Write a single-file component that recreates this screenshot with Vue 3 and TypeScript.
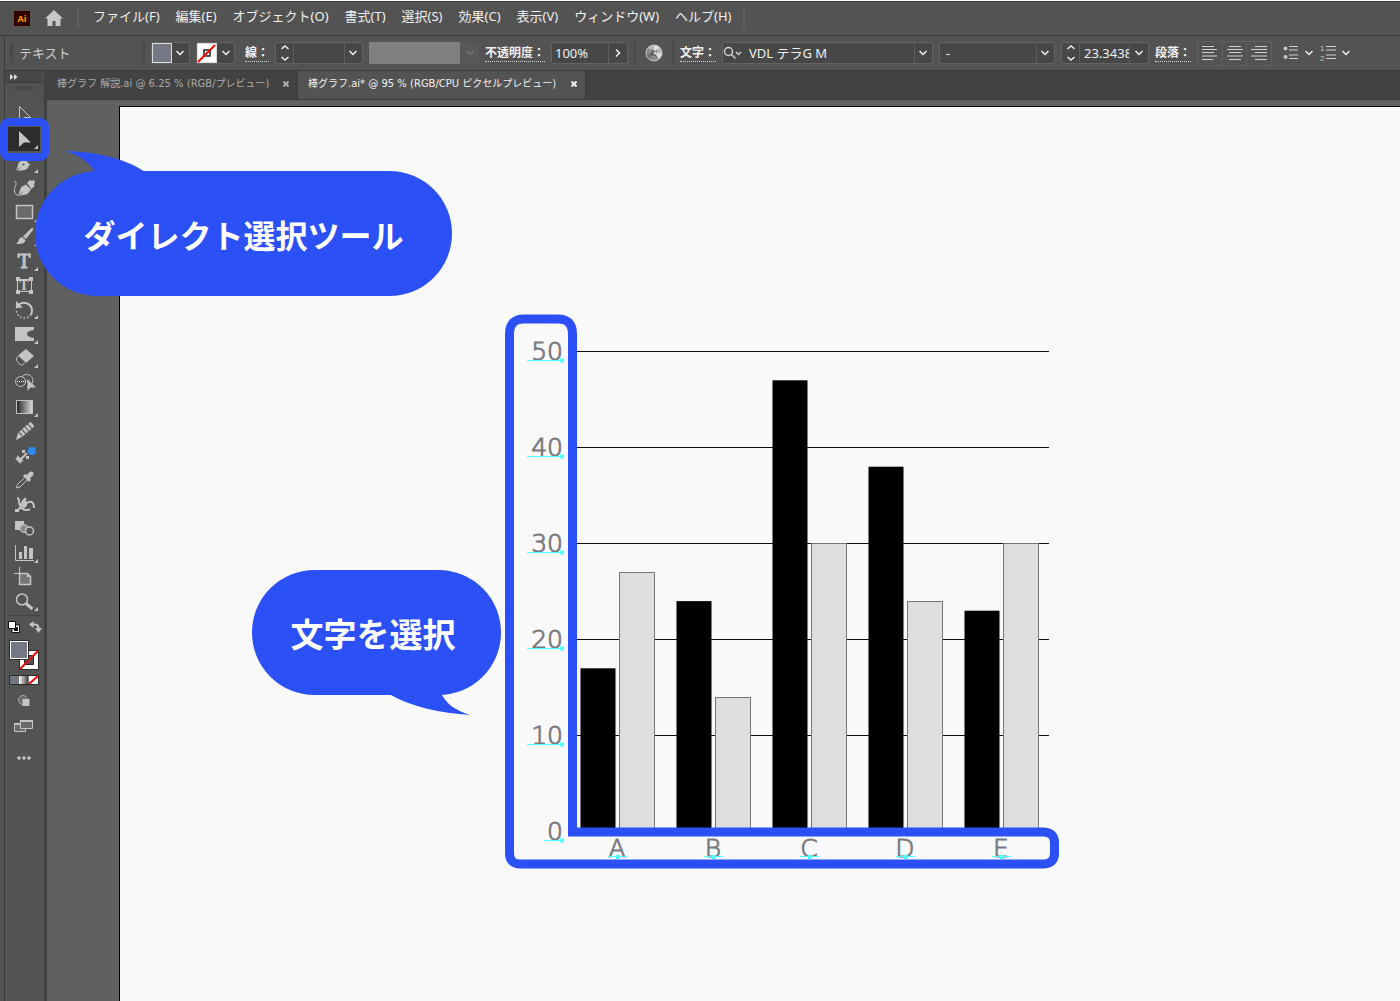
<script setup lang="ts">
import { ref } from 'vue'

interface Tool {
  id: string
  label: string
  more: boolean
}

const menus: string[] = [
  'ファイル(F)',
  '編集(E)',
  'オブジェクト(O)',
  '書式(T)',
  '選択(S)',
  '効果(C)',
  '表示(V)',
  'ウィンドウ(W)',
  'ヘルプ(H)',
]

const toolGroups: Tool[][] = [
  [
    { id: 'select', label: '選択ツール', more: false },
    { id: 'direct', label: 'ダイレクト選択ツール', more: true },
    { id: 'pen', label: 'ペンツール', more: true },
  ],
  [
    { id: 'curve', label: '曲線ツール', more: false },
    { id: 'rect', label: '長方形ツール', more: true },
    { id: 'brush', label: 'ブラシツール', more: true },
  ],
  [
    { id: 'type', label: '文字ツール', more: true },
    { id: 'touch', label: '文字タッチツール', more: false },
    { id: 'rotate', label: '回転ツール', more: true },
  ],
  [
    { id: 'width', label: '線幅ツール', more: true },
    { id: 'eraser', label: '消しゴムツール', more: true },
    { id: 'shape', label: 'シェイプ形成ツール', more: false },
  ],
  [
    { id: 'gradient', label: 'グラデーションツール', more: true },
    { id: 'pencil', label: '鉛筆ツール', more: false },
    { id: 'pin', label: 'パペットワープツール', more: false },
  ],
  [
    { id: 'dropper', label: 'スポイトツール', more: false },
    { id: 'warp', label: 'ワープツール', more: false },
    { id: 'blend', label: 'ブレンドツール', more: false },
  ],
  [
    { id: 'graph', label: '棒グラフツール', more: true },
    { id: 'artboard', label: 'アートボードツール', more: false },
    { id: 'zoom', label: 'ズームツール', more: true },
  ],
]

const activeTool = ref('direct')
const opacity = ref('100%')
const fontSize = ref('23.3438 pt')

// Chart geometry: pixels per unit, baseline and distance between categories
const unit = 9.6
const base = 521.5
const step = 96
const ticks: number[] = [50, 40, 30, 20, 10, 0]
const series = [
  { name: 'A', dark: 17, light: 27 },
  { name: 'B', dark: 24, light: 14 },
  { name: 'C', dark: 47, light: 30 },
  { name: 'D', dark: 38, light: 24 },
  { name: 'E', dark: 23, light: 30 },
]
const level = (v: number): number => Math.round(base - v * unit - 0.5) + 0.5
</script>

<template>
  <div class="app">
    <header class="menubar">
      <span class="logo">Ai</span>
      <button class="home" aria-label="ホーム">
        <svg width="20" height="18" viewBox="0 0 20 18"><path d="M10 1 1 9.500h2.500V17h5v-5h3v5h5V9.500H19z" fill="#c8c8c8" /></svg>
      </button>
      <span class="bar"></span>
      <nav class="menus">
        <button v-for="m in menus" :key="m">{{ m }}</button>
      </nav>
      <span class="bar"></span>
    </header>

    <section class="controls">
      <span class="grip"></span>
      <span class="kind">テキスト</span>
      <span class="sep"></span>
      <div class="field swatch">
        <button class="chip fill" aria-label="塗り"></button>
        <button class="arrow" aria-label="塗りの一覧"><svg class="chev" viewBox="0 0 10 6"><path d="m1.500 1 3.500 3.500L8.500 1" /></svg></button>
      </div>
      <div class="field swatch">
        <button class="chip none" aria-label="線">
          <svg width="20" height="20" viewBox="0 0 20 20"><path d="M7 7h6v6H7z" fill="none" stroke="#222" stroke-width="1.500" /><path d="M1 19 18 2" stroke="#f00808" stroke-width="2" /></svg>
        </button>
        <button class="arrow" aria-label="線の一覧"><svg class="chev" viewBox="0 0 10 6"><path d="m1.500 1 3.500 3.500L8.500 1" /></svg></button>
      </div>
      <label class="name short" for="weight"><span>線：</span></label>
      <div class="field number">
        <button class="spin" aria-label="線幅の増減">
          <svg width="10" height="18" viewBox="0 0 10 18"><path d="m1.500 5 3.500-3L8.500 5M1.500 13 5 16l3.500-3" /></svg>
        </button>
        <select id="weight"><option></option></select>
        <svg class="chev over" viewBox="0 0 10 6"><path d="m1.500 1 3.500 3.500L8.500 1" /></svg>
      </div>
      <div class="profile">
        <span></span>
        <svg class="chev dim" viewBox="0 0 10 6"><path d="m1.500 1 3.500 3.500L8.500 1" /></svg>
      </div>
      <label class="name long" for="opacity"><span>不透明度：</span></label>
      <div class="field opacity">
        <input id="opacity" v-model="opacity" type="text" />
        <button class="arrow" aria-label="不透明度の一覧"><svg width="6" height="10" viewBox="0 0 6 10"><path d="m1 1.500 3.500 3.500L1 8.500" /></svg></button>
      </div>
      <span class="sep"></span>
      <button class="wheel" aria-label="オブジェクトを再配色">
        <svg width="18" height="18" viewBox="0 0 18 18">
          <circle cx="9" cy="9" r="8" fill="#8c8c8c" />
          <path class="a" d="M9 9V1a8 8 0 0 1 6 2.500z" />
          <path class="b" d="m9 9 6-5.500A8 8 0 0 1 17 9z" />
          <path class="a" d="M9 9h8a8 8 0 0 1-3 6z" />
          <path class="c" d="m9 9-5 6.200A8 8 0 0 1 1 9z" />
          <path class="b" d="M9 9 3 3.500A8 8 0 0 1 9 1z" />
          <circle cx="9" cy="9" r="8" fill="none" stroke="#c4c4c4" />
          <path d="M9 6v6M6 9h6M6.500 5.500l5 7M12 6l-6 6" stroke="#444" />
          <circle cx="10" cy="9" r="1.500" fill="#d8d8d8" />
        </svg>
      </button>
      <span class="sep"></span>
      <label class="name mid" for="font"><span>文字：</span></label>
      <div class="field font">
        <svg class="search" width="20" height="14" viewBox="0 0 20 14"><circle cx="5.500" cy="5.500" r="4" /><path d="m8.500 8.500 4 4M13 6l2.500 2.500L18 6" /></svg>
        <select id="font"><option>VDL テラG M</option></select>
        <svg class="chev over" viewBox="0 0 10 6"><path d="m1.500 1 3.500 3.500L8.500 1" /></svg>
      </div>
      <div class="field style">
        <select aria-label="フォントスタイル"><option>-</option></select>
        <svg class="chev over" viewBox="0 0 10 6"><path d="m1.500 1 3.500 3.500L8.500 1" /></svg>
      </div>
      <div class="field number">
        <button class="spin" aria-label="サイズの増減">
          <svg width="10" height="18" viewBox="0 0 10 18"><path d="m1.500 5 3.500-3L8.500 5M1.500 13 5 16l3.500-3" /></svg>
        </button>
        <input v-model="fontSize" class="size" type="text" aria-label="フォントサイズ" />
        <button class="arrow" aria-label="サイズの一覧"><svg class="chev" viewBox="0 0 10 6"><path d="m1.500 1 3.500 3.500L8.500 1" /></svg></button>
      </div>
      <span class="name mid"><span>段落：</span></span>
      <div class="aligns">
        <button aria-label="左揃え"><svg width="16" height="16" viewBox="0 0 16 16"><path d="M0 1.500h12M0 4.500h15M0 7.500h12M0 11h15M0 14.500h11" /></svg></button>
        <button aria-label="中央揃え"><svg width="16" height="16" viewBox="0 0 16 16"><path d="M2 1.500h12M0 4.500h16M2 7.500h12M0 11h16M2 14.500h12" /></svg></button>
        <button aria-label="右揃え"><svg width="16" height="16" viewBox="0 0 16 16"><path d="M4 1.500h12M0 4.500h16M4 7.500h12M0 11h16M4 14.500h12" /></svg></button>
      </div>
      <button class="list first" aria-label="箇条書き">
        <svg width="16" height="16" viewBox="0 0 16 16"><circle cx="2.500" cy="3.500" r="2" /><circle cx="2.500" cy="12" r="2" /><path d="M6 1.500h9M6 5h9M6 10h9M6 13.500h9" /></svg>
        <svg class="chev" viewBox="0 0 10 6"><path d="m1.500 1 3.500 3.500L8.500 1" /></svg>
      </button>
      <button class="list" aria-label="自動番号">
        <svg width="16" height="20" viewBox="0 -2 16 20"><text x="0" y="6">1</text><text x="0" y="16">2</text><path d="M6 1.500h10M6 5h10M6 10h10M6 13.500h10" /></svg>
        <svg class="chev" viewBox="0 0 10 6"><path d="m1.500 1 3.500 3.500L8.500 1" /></svg>
      </button>
    </section>

    <div class="body">
      <aside class="tools">
        <button class="expand" aria-label="パネルを展開">
          <svg width="8" height="6" viewBox="0 0 8 6"><path d="M0 0l3.500 3L0 6zM4 0l3.500 3L4 6z" fill="#ddd" /></svg>
        </button>
        <span class="handle"></span>
        <div class="groups">
          <div v-for="(group, g) in toolGroups" :key="g" class="group">
            <button
              v-for="t in group"
              :key="t.id"
              class="tool"
              :class="{ active: t.id === activeTool }"
              :aria-label="t.label"
              @click="activeTool = t.id"
            >
              <svg width="32" height="24" viewBox="0 0 32 24">
                <path v-if="t.id === 'select'" class="ln" d="M11.500 3.500V19l4.500-4.500h6.500z" />
                <path v-if="t.id === 'direct'" class="so" d="M11 4v16l5-4.500h7z" />
                <g v-if="t.id === 'pen'">
                  <path class="so" d="M8 19.500c2-3 1.500-7 4-9l5-2 5 5-3 4.500c-3 2-7 1-10 2l5-5z" />
                  <circle cx="15.500" cy="13.500" r="1" fill="#535353" />
                </g>
                <g v-if="t.id === 'curve'">
                  <path class="so" d="M10 19.500c2-3 1.500-7 4-9l4-2 5 5-3 4c-3 2-6 1-9 2.500l5-5z" />
                  <path class="so" d="m19 7 3-3 2 1 2-1 1 2-1 2 .5 2-3 3z" />
                  <path class="ln" d="M6.500 5c4 3-1 6 0 10 .5 3 2 4.500 5 4.500" />
                </g>
                <path v-if="t.id === 'rect'" d="M8.500 5.500h16v13h-16z" fill="#6a6a6a" stroke="#c4c4c4" stroke-width="1.500" />
                <path v-if="t.id === 'brush'" class="so" d="M23 4.500c1.500-1 3 0 2 1.500L18 15l-3-2.500zM14 13l3.500 3c-.5 4-5 4-9.500 4 3-1.500 2-6 6-7z" />
                <text v-if="t.id === 'type'" class="letter thin" x="16" y="19" font-size="19">T</text>
                <g v-if="t.id === 'touch'">
                  <path class="ln" d="M9.500 6.500h14v12h-14z" />
                  <path class="so" d="M8 4h4v4H8zM21 4h4v4h-4zM8 17h4v4H8zM21 17h4v4h-4z" />
                  <text class="letter" x="16" y="17" font-size="12">T</text>
                </g>
                <g v-if="t.id === 'rotate'">
                  <path d="M10 8.500a8 8 0 0 1 14 5c0 2-.5 3-1 4" fill="none" stroke="#c4c4c4" stroke-width="2" />
                  <path d="M23 17.500a8 8 0 0 1-14.500-6" fill="none" stroke="#c4c4c4" stroke-width="1.500" stroke-dasharray="1.500 2" />
                  <path class="so" d="M8 4v7l7-.5z" />
                </g>
                <path v-if="t.id === 'width'" class="so" d="M7 5h19v3c-4 .5-7 2-7 4s3 3.500 7 4v3H7z" />
                <g v-if="t.id === 'eraser'">
                  <path class="so" d="m18 3 8 7-8 7-8-7.500z" />
                  <path class="ln" d="m10 10.500-1.500 2v2l4 4.500h2l2-2" />
                </g>
                <g v-if="t.id === 'shape'">
                  <circle class="ln" cx="12.500" cy="11.500" r="5" />
                  <path class="ln" d="M14 7a6 6 0 1 1 5 9.500" />
                  <path d="M9 11.500h11" stroke="#fff" stroke-dasharray="1 1" />
                  <path class="so" d="M19.500 9v12l3-3.500h5.500z" />
                </g>
                <path v-if="t.id === 'gradient'" d="M8.500 5.500h16v13h-16z" fill="url(#fade)" stroke="#c4c4c4" />
                <g v-if="t.id === 'pencil'">
                  <path d="M24.500 5 12 16" stroke="#c4c4c4" stroke-width="6" stroke-dasharray="3 1" fill="none" />
                  <path class="so" d="m10 14 4 4-6 3z" />
                </g>
                <g v-if="t.id === 'pin'">
                  <path class="ln2" d="m11 18 8-8M8 15l5 5" />
                  <path class="so" d="m9 12 1 7 6-1zM14 7h3v3h-3zM18 13h3v3h-3z" />
                  <circle cx="24" cy="8" r="4" fill="#2b8cf0" />
                </g>
                <g v-if="t.id === 'dropper'">
                  <path class="so" d="m17 6 2 1c2-4 5-4 6-3s1 4-3 6l1 2-2 2-6-6z" />
                  <path class="ln" d="m16.500 9.500-7 7-1 3.500 3.500-1 7-7" />
                </g>
                <g v-if="t.id === 'warp'">
                  <path class="ln2" d="M9 6c4 0 0 6 4 8 4 1 5-4 8-4 4-1 5 2 5 6M9 19c3-1 4-7 6-10l3-3M12 14c2 4 7 5 10 3" />
                  <path class="so" d="m14 12 4-5 1 7-4 3zM7 17h4v3H7z" />
                </g>
                <g v-if="t.id === 'blend'">
                  <path class="so" d="M7 5h9v9H7z" />
                  <circle cx="16" cy="12.500" r="4" fill="#8a8a8a" stroke="#c4c4c4" />
                  <circle cx="21.500" cy="15" r="4" fill="#535353" stroke="#c4c4c4" stroke-width="1.500" />
                </g>
                <g v-if="t.id === 'graph'">
                  <path class="ln" d="M7.500 4v15.500H26" />
                  <path class="so" d="M11 11h3v7h-3zM16 5h3v13h-3zM21 7h4v11h-4z" />
                </g>
                <g v-if="t.id === 'artboard'">
                  <path class="ln" d="M11.500 2v6M6 8.500h5" />
                  <path d="M11.500 8.500h8l3 3v8h-11z" fill="#757575" stroke="#c4c4c4" stroke-width="1.500" />
                  <path class="so" d="M19 8v4h4z" />
                </g>
                <g v-if="t.id === 'zoom'">
                  <circle cx="14" cy="10.500" r="5.500" fill="none" stroke="#c4c4c4" stroke-width="1.500" />
                  <path d="m18 14.500 6.500 5.500" stroke="#c4c4c4" stroke-width="3" />
                </g>
                <path v-if="t.more" class="so" d="M30 18v4h-4z" />
              </svg>
            </button>
          </div>
        </div>
        <span class="rule"></span>
        <div class="row">
          <button aria-label="初期設定の塗りと線">
            <svg width="12" height="12" viewBox="0 0 12 12"><path d="M4 4h7.500v7.500H4z" fill="#fff" stroke="#111" /><path d="M6 6h4v4H6z" fill="#111" /><path d="M.5.500h7v7h-7z" fill="#fff" stroke="#111" /></svg>
          </button>
          <button aria-label="塗りと線を入れ替え">
            <svg width="13" height="12" viewBox="0 0 13 12"><path d="M3 3.500h3c2.500 0 3.500 1.500 3.500 4.500" fill="none" stroke="#c4c4c4" stroke-width="2" /><path class="so" d="M0 3.500 4.500 0v7zM6 7h7l-3.500 5z" /></svg>
          </button>
        </div>
        <button class="pair" aria-label="塗りと線">
          <svg width="30" height="30" viewBox="0 0 30 30">
            <path d="M10.500 10.500h19v19h-19z" fill="#fff" stroke="#2a2a2a" />
            <path d="M15.500 15.500h9v9h-9z" fill="#535353" stroke="#2a2a2a" />
            <path d="M11 29 29 11" stroke="#f00808" stroke-width="2" />
            <path d="M.5.500h19v19H.5z" fill="#fff" stroke="#2a2a2a" />
            <path d="M2 2h16v16H2z" fill="#747882" />
          </svg>
        </button>
        <button class="modes" aria-label="カラーモード">
          <svg width="30" height="10" viewBox="0 0 30 10">
            <path d="M.5.500h29v9H.5z" fill="#747882" stroke="#2a2a2a" />
            <path d="M10 1h9v8h-9z" fill="url(#shine)" />
            <path d="M20 1h9v8h-9z" fill="#fff" />
            <path d="m20 9 9-8" stroke="#f00808" stroke-width="2" />
          </svg>
        </button>
        <button class="draw" aria-label="描画方法">
          <svg width="14" height="14" viewBox="0 0 14 14"><circle cx="6" cy="6" r="4.500" fill="#6a6a6a" stroke="#aaa" /><path d="M5.500 5h7v7h-7z" fill="#c4c4c4" /></svg>
        </button>
        <button class="screen" aria-label="スクリーンモード">
          <svg width="20" height="14" viewBox="0 0 20 14"><path d="M.5 4.500h11v8H.5z" fill="#6a6a6a" stroke="#c4c4c4" /><path d="M6.500 1.500h12v8h-12z" fill="#6a6a6a" stroke="#c4c4c4" /><path d="M6 1h13v2H6zM0 4h6v2H0z" fill="#c4c4c4" /></svg>
        </button>
        <button class="more" aria-label="ツールバーを編集">
          <svg width="14" height="4" viewBox="0 0 14 4"><circle cx="2" cy="2" r="1.800" /><circle cx="7" cy="2" r="1.800" /><circle cx="12" cy="2" r="1.800" /></svg>
        </button>
        <svg class="defs" width="0" height="0">
          <defs>
            <linearGradient id="fade"><stop offset="0" stop-color="#222" /><stop offset="1" stop-color="#ddd" /></linearGradient>
            <linearGradient id="shine"><stop offset="0" stop-color="#fff" /><stop offset="1" stop-color="#444" /></linearGradient>
          </defs>
        </svg>
      </aside>

      <main class="work">
        <div class="tabs">
          <div class="tab first">
            <span>棒グラフ 解説.ai @ 6.25 % (RGB/プレビュー)</span>
            <button aria-label="閉じる"><svg width="6" height="6" viewBox="0 0 6 6"><path d="m.5.500 5 5m0-5-5 5" /></svg></button>
          </div>
          <div class="tab current">
            <span>棒グラフ.ai* @ 95 % (RGB/CPU ピクセルプレビュー)</span>
            <button aria-label="閉じる"><svg width="6" height="6" viewBox="0 0 6 6"><path d="m.5.500 5 5m0-5-5 5" /></svg></button>
          </div>
        </div>
        <div class="canvas">
          <div class="artboard">
            <svg class="chart" width="565" height="565" viewBox="0 0 565 565" role="img" aria-label="棒グラフ">
              <g v-for="t in ticks" :key="t">
                <line v-if="t > 0" x1="77" x2="549" :y1="level(t)" :y2="level(t)" stroke="#111" />
                <text class="axis" x="63" :y="level(t) + 8" text-anchor="end">{{ t }}</text>
                <path class="guide" :d="`M${t > 0 ? 27 : 44} ${level(t) + 9}H62`" />
                <rect class="knot" x="60" :y="level(t) + 7" width="4" height="4" />
              </g>
              <g v-for="(s, i) in series" :key="s.name">
                <rect :x="80.5 + i * step" :y="base - s.dark * unit" width="35" :height="s.dark * unit" fill="#000" />
                <rect :x="119.5 + i * step" :y="level(s.light)" width="35" :height="s.light * unit" fill="#dedede" stroke="#777" />
                <text class="axis" :x="117 + i * step" y="547" text-anchor="middle">{{ s.name }}</text>
                <path class="guide" :d="`M${108 + i * step} 546.5h19`" />
                <rect class="knot" :x="116 + i * step" y="545" width="4" height="4" />
              </g>
              <path
                class="frame"
                d="M24 9H58Q72.500 9 72.500 24V522H543Q554.500 522 554.500 533V543Q554.500 554 543 554H20Q9.500 554 9.500 543V24Q9.500 9 24 9Z"
              />
            </svg>
            <div class="bubble lower">
              <p>文字を選択</p>
              <svg width="82" height="24" viewBox="0 0 82 24"><path d="M0 3C22 16 52 22 81 24 65 19 56 12 51 0H0z" /></svg>
            </div>
          </div>
        </div>
      </main>
    </div>

    <span class="ring"></span>
    <div class="bubble upper">
      <svg width="82" height="24" viewBox="0 0 82 24"><path d="M0 0C30 1 58 6 82 22H31C24 11 14 4 0 0z" /></svg>
      <p>ダイレクト選択ツール</p>
    </div>
  </div>
</template>

<style>
body {
  margin: 0;
  background: #606060;
}
</style>

<style scoped>
.app {
  position: relative;
  display: flex;
  flex-direction: column;
  min-height: 100vh;
  overflow: hidden;
  background: #535353;
  color: #f0f0f0;
  font-family: "Noto Sans", "Noto Sans CJK JP", sans-serif;
  font-size: 13px;
  line-height: 20px;
}
.app * {
  box-sizing: border-box;
}
button,
input,
select {
  margin: 0;
  padding: 0;
  border: 0;
  border-radius: 0;
  background: none;
  color: inherit;
  font: inherit;
}
button {
  display: flex;
  align-items: center;
  justify-content: center;
}
svg {
  display: block;
  flex: none;
}

/* Menu bar */
.menubar {
  display: flex;
  align-items: center;
  height: 36px;
  padding-left: 14px;
  border-top: 1px solid #fff;
  border-bottom: 1px solid #3a3a3a;
  box-shadow: inset 0 1px #3c3c3c;
}
.logo {
  width: 16px;
  height: 15px;
  background: #330000;
  color: #ff9a00;
  font-size: 9px;
  font-weight: 700;
  line-height: 15px;
  text-align: center;
}
.home {
  margin: 0 13px 0 14px;
}
.bar {
  width: 2px;
  height: 20px;
  background: #5f5f5f;
}
.menus {
  display: flex;
  gap: 16px;
  margin: 0 12px 4px 14px;
}
.menus button {
  white-space: nowrap;
}

/* Control bar */
.controls {
  display: flex;
  align-items: center;
  gap: 6px;
  height: 35px;
  margin-left: 4px;
  padding-left: 5px;
  border-left: 1px solid #3a3a3a;
  border-bottom: 1px solid #3a3a3a;
  white-space: nowrap;
}
.controls > * {
  flex: none;
}
.grip {
  width: 3px;
  height: 20px;
  background: repeating-linear-gradient(#3f3f3f 0 1px, transparent 1px 2px);
}
.kind {
  width: 118px;
  color: #cfcfcf;
}
.sep {
  width: 2px;
  height: 26px;
  background: #4a4a4a;
}
.field {
  position: relative;
  display: flex;
  height: 22px;
  border: 1px solid #636363;
  border-radius: 2px;
  background: #474747;
}
.swatch {
  width: 39px;
}
.chip {
  width: 20px;
  border: 1px solid #ddd;
}
.fill {
  background: #747882;
}
.none {
  background: #fff;
}
.arrow {
  width: 18px;
}
.chev {
  width: 10px;
  height: 6px;
}
.controls svg path {
  fill: none;
}
.chev path,
.spin path,
.arrow path {
  fill: none;
  stroke: #f0f0f0;
  stroke-width: 1.5;
}
.over {
  position: absolute;
  top: 7px;
  right: 4px;
  pointer-events: none;
}
.name {
  display: flex;
  justify-content: flex-end;
  font-size: 12px;
  font-weight: 700;
  line-height: 16px;
}
.name span {
  border-bottom: 1px dotted #d0d0d0;
}
.short {
  width: 28px;
}
.mid {
  width: 36px;
}
.long {
  width: 60px;
}
.number {
  width: 88px;
}
.spin {
  width: 18px;
  border-right: 1px solid #5c5c5c;
}
select {
  flex: 1;
  min-width: 0;
  appearance: none;
  background: linear-gradient(#5c5c5c, #5c5c5c) right 17px top / 1px 100% no-repeat;
}
.profile {
  display: flex;
  align-items: center;
  gap: 5px;
  width: 110px;
  height: 22px;
  background: #585858;
}
.profile span {
  width: 91px;
  height: 22px;
  background: #808080;
}
.controls .dim path {
  stroke: #757575;
}
.opacity {
  width: 77px;
}
.opacity input {
  width: 57px;
  padding-left: 3px;
  border-right: 1px solid #5c5c5c;
}
.wheel {
  width: 24px;
}
.controls .wheel .a {
  fill: #dcdcdc;
}
.controls .wheel .b {
  fill: #b8b8b8;
}
.controls .wheel .c {
  fill: #747474;
}
.font {
  width: 211px;
}
.search {
  align-self: center;
  margin-right: 6px;
}
.controls .search circle,
.controls .search path {
  fill: none;
  stroke: #cfcfcf;
  stroke-width: 1.5;
}
.style {
  width: 116px;
}
.style select {
  padding-left: 6px;
}
.size {
  flex: 1;
  min-width: 0;
  padding-left: 4px;
  border-right: 1px solid #5c5c5c;
}
.aligns {
  display: flex;
  width: 75px;
  height: 25px;
  border: 1px solid #606060;
}
.aligns button {
  flex: 1;
}
.aligns button + button {
  border-left: 1px solid #606060;
}
.aligns path,
.list path {
  stroke: #d0d0d0;
}
.list {
  gap: 5px;
}
.first.list {
  padding-left: 5px;
}
.list circle,
.list text {
  fill: #c4c4c4;
  font-family: "Liberation Sans", sans-serif;
  font-size: 8px;
}
.list .chev path {
  stroke: #f0f0f0;
}

/* Tool panel */
.body {
  display: flex;
  flex: 1;
}
.tools {
  display: flex;
  flex: none;
  flex-direction: column;
  align-items: center;
  width: 43px;
  margin-left: 4px;
  padding-right: 1px;
  border-left: 1px solid #3a3a3a;
  border-right: 3px solid #404040;
}
.expand {
  justify-content: flex-start;
  width: 100%;
  height: 12px;
  padding-left: 5px;
  border-bottom: 1px solid #3a3a3a;
  background: #484848;
}
.handle {
  width: 20px;
  height: 4px;
  margin: 3px 0 13px;
  background: repeating-linear-gradient(90deg, #3f3f3f 0 1px, transparent 1px 2px);
}
.groups {
  display: flex;
  flex-direction: column;
  gap: 1px;
}
.tool {
  width: 32px;
  height: 24px;
}
.active {
  background: #2d2d2d;
}
.so {
  fill: #c4c4c4;
}
.ln {
  fill: none;
  stroke: #c4c4c4;
}
.ln2 {
  fill: none;
  stroke: #c4c4c4;
  stroke-width: 2;
}
.letter {
  fill: #c4c4c4;
  font-family: "DejaVu Serif", serif;
  font-weight: 700;
  text-anchor: middle;
}
.thin {
  stroke: #c4c4c4;
  font-weight: 400;
}
.rule {
  width: 32px;
  height: 1px;
  margin: 2px 0 5px;
  background: #454545;
}
.row {
  display: flex;
  gap: 9px;
  padding-left: 2px;
}
.pair {
  margin-top: 7px;
}
.modes {
  margin-top: 5px;
}
.draw {
  margin-top: 9px;
}
.screen {
  margin-top: 11px;
}
.more {
  margin-top: 23px;
}
.more circle {
  fill: #c4c4c4;
}
.defs {
  position: absolute;
}

/* Documents */
.work {
  display: flex;
  flex: 1;
  flex-direction: column;
  min-width: 0;
}
.tabs {
  display: flex;
  height: 29px;
  border-bottom: 1px solid #3a3a3a;
  background: #424242;
}
.tab {
  display: flex;
  align-items: center;
  justify-content: space-between;
  padding: 0 8px 2px 10px;
  border-right: 1px solid #3a3a3a;
  color: #ababab;
  font-family: "DejaVu Sans", "Noto Sans CJK JP", sans-serif;
  font-size: 10px;
  white-space: nowrap;
}
.tab.first {
  width: 251px;
}
.tab.current {
  width: 288px;
  background: #535353;
  color: #f0f0f0;
}
.tab path {
  stroke: currentColor;
  stroke-width: 2;
}
.canvas {
  display: flex;
  flex: 1;
  padding: 6px 0 0 72px;
  background: #606060;
}
.artboard {
  position: relative;
  flex: 1;
  border-top: 1px solid #000;
  border-left: 1px solid #000;
  background: #f9f9f9;
}
.chart {
  position: absolute;
  top: 203px;
  left: 380px;
}
.axis {
  fill: #7a7c82;
  stroke: #7a7c82;
  stroke-width: 1;
  font-family: "DejaVu Sans Light", "DejaVu Sans", sans-serif;
  font-size: 25px;
  font-weight: 200;
}
.guide {
  stroke: #4dffff;
}
.knot {
  fill: #4dffff;
}
.frame {
  fill: none;
  stroke: #2b50f6;
  stroke-width: 9;
}

/* Callouts */
.ring {
  position: absolute;
  top: 118px;
  left: 0;
  width: 49px;
  height: 43px;
  border: 8px solid #2b50f6;
  border-radius: 9px;
}
.bubble {
  position: absolute;
  display: flex;
  align-items: center;
  justify-content: center;
  height: 125px;
  border-radius: 63px;
  background: #2b50f6;
  color: #fff;
  font-family: "Noto Sans CJK JP", sans-serif;
  font-size: 33px;
  font-weight: 700;
  line-height: 48px;
}
.bubble p {
  margin: 0;
  white-space: nowrap;
}
.bubble svg {
  position: absolute;
  fill: #2b50f6;
}
.upper {
  top: 171px;
  left: 35px;
  width: 417px;
  font-size: 32px;
}
.upper svg {
  top: -20px;
  left: 30px;
}
.lower {
  top: 463px;
  left: 132px;
  width: 249px;
  padding-right: 7px;
}
.lower svg {
  top: 121px;
  left: 137px;
}
</style>
